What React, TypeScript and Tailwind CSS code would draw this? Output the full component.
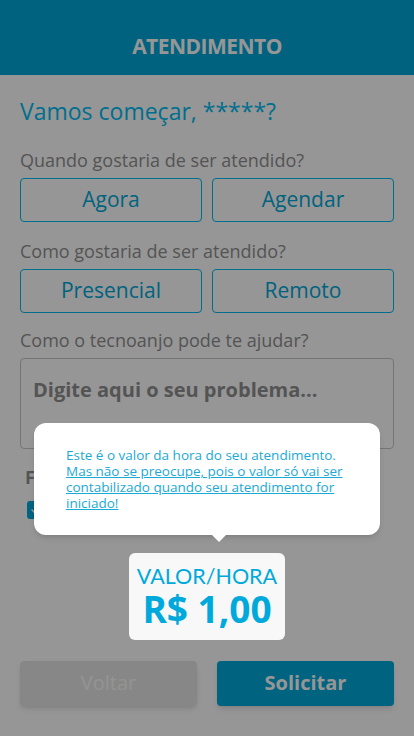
import { Check } from 'lucide-react';

const font = { fontFamily: '"Open Sans", "Noto Sans", sans-serif' };

const OptionButton = ({ label }: { label: string }) => (
  <button className="h-[44px] flex-1 rounded-[4px] border border-[#00bcf0] bg-white text-[21px] text-[#00a8d8]">
    {label}
  </button>
);

const App = () => {
  return (
    <div className="relative h-[736px] w-[414px] overflow-hidden bg-white" style={font}>
      {/* header */}
      <header className="flex h-[75px] items-end justify-center bg-[#00a7d9] pb-[13px]">
        <h1 className="text-[21px] font-bold tracking-tight text-white">ATENDIMENTO</h1>
      </header>

      {/* form */}
      <main className="flex flex-col px-[20px] pt-[20px]">
        <h2 className="text-[23px] leading-[32px] text-[#00bcf1]">Vamos começar, *****?</h2>

        <p className="mt-[21px] text-[18px] leading-[24px] text-[#909090]">Quando gostaria de ser atendido?</p>
        <div className="mt-[6px] flex gap-[10px]">
          <OptionButton label="Agora" />
          <OptionButton label="Agendar" />
        </div>

        <p className="mt-[17px] text-[18px] leading-[24px] text-[#909090]">Como gostaria de ser atendido?</p>
        <div className="mt-[6px] flex gap-[10px]">
          <OptionButton label="Presencial" />
          <OptionButton label="Remoto" />
        </div>

        <p className="mt-[15px] text-[18px] leading-[24px] text-[#909090]">Como o tecnoanjo pode te ajudar?</p>
        <div className="mt-[6px] h-[91px] rounded-[4px] border border-[#c8c8c8] px-[12px] pt-[16px]">
          <p className="text-[20px] font-bold text-[#909090]">Digite aqui o seu problema...</p>
        </div>

        <p className="mt-[16px] pl-[5px] text-[18px] font-bold leading-[24px] text-[#909090]">Forma de pagamento</p>
        <div className="mt-[10px] flex items-center gap-2 pl-[7px]">
          <span className="flex h-[18px] w-[18px] items-center justify-center rounded-[3px] bg-[#00a8d8]">
            <Check className="h-3 w-3 text-white" strokeWidth={3} />
          </span>
          <span className="text-[15px] text-[#909090]">Cartão de crédito</span>
        </div>

        <div className="mt-[139px] flex gap-[20px]">
          <button className="h-[45px] flex-1 rounded-[4px] bg-[#e6e6e6] text-[20px] text-[#fbfbfb] shadow-md">
            Voltar
          </button>
          <button className="h-[45px] flex-1 rounded-[4px] bg-[#00a8d9] text-[20px] font-bold text-white shadow-md">
            Solicitar
          </button>
        </div>
      </main>

      {/* overlay */}
      <div className="absolute inset-0 bg-[rgba(0,0,0,0.41)]" />

      {/* tooltip */}
      <div className="absolute left-[34px] top-[423px] w-[346px]">
        <div className="relative rounded-[12px] bg-white px-[32px] pb-[24px] pt-[24px] shadow-md">
          <p className="text-[13.5px] leading-[16px] text-[#1ba9d6]">
            Este é o valor da hora do seu atendimento.
            <br />
            <span className="underline">
              Mas não se preocupe, pois o valor só vai ser contabilizado quando seu atendimento for iniciado!
            </span>
          </p>
          <span className="absolute -bottom-[7px] left-[177px] h-0 w-0 border-x-[8px] border-t-[8px] border-x-transparent border-t-white" />
        </div>
      </div>

      {/* valor/hora */}
      <div className="absolute left-[129px] top-[553px] flex h-[87px] w-[156px] flex-col items-center justify-center rounded-[6px] bg-[#f8f8f8]">
        <p className="text-[21.5px] leading-[24px] text-[#00a9dc]" style={{ fontFamily: 'Lato, sans-serif' }}>
          VALOR/HORA
        </p>
        <p className="text-[37px] font-bold leading-[42px] text-[#00a9dc]">R$ 1,00</p>
      </div>
    </div>
  );
};

export default App;
